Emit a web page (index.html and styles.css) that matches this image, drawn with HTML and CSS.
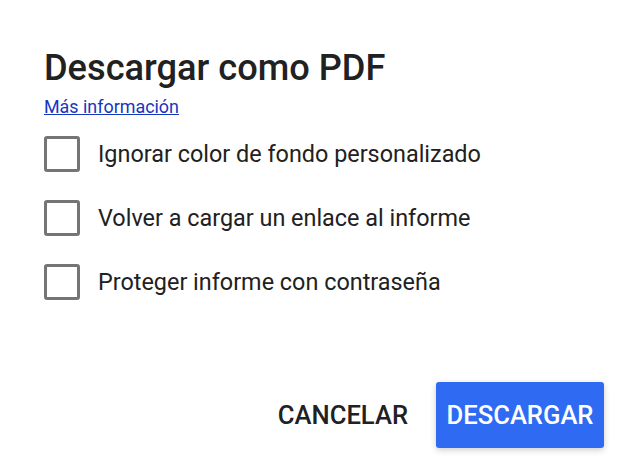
FILE: index.html
```
<!DOCTYPE html>
<html lang="es">
<head>
<meta charset="utf-8">
<link rel="stylesheet" href="styles.css">
</head>
<body>
<div class="dialog">
  <h1 class="title">Descargar como PDF</h1>
  <a class="link" href="#">Más información</a>
  <div class="options">
    <label class="option"><span class="box"></span><span class="label">Ignorar color de fondo personalizado</span></label>
    <label class="option"><span class="box"></span><span class="label">Volver a cargar un enlace al informe</span></label>
    <label class="option"><span class="box"></span><span class="label">Proteger informe con contraseña</span></label>
  </div>
  <div class="actions">
    <button class="btn btn-text">CANCELAR</button>
    <button class="btn btn-primary">DESCARGAR</button>
  </div>
</div>
</body>
</html>
```
FILE: styles.css
```
html, body {
  margin: 0;
  padding: 0;
  background: #ffffff;
}
body {
  font-family: Roboto, "Liberation Sans", sans-serif;
  color: #212121;
  width: 628px;
  height: 466px;
  overflow: hidden;
}
.dialog {
  padding: 47px 24px 0 44px;
  display: flex;
  flex-direction: column;
}
.title {
  margin: 0;
  font-size: 36.2px;
  font-weight: 500;
  line-height: 42px;
  color: #212121;
}
.link {
  margin-top: 7px;
  font-size: 17.9px;
  line-height: 22px;
  color: #1636c0;
  text-decoration: underline;
  align-self: flex-start;
}
.options {
  margin-top: 18px;
  display: flex;
  flex-direction: column;
  gap: 28px;
}
.option {
  display: flex;
  align-items: center;
  gap: 18px;
  height: 36px;
}
.box {
  box-sizing: border-box;
  width: 36px;
  height: 36px;
  border: 3.5px solid #757575;
  border-radius: 3px;
  flex: none;
}
.label {
  font-size: 23.4px;
  color: #212121;
}
.actions {
  margin-top: 82px;
  display: flex;
  justify-content: flex-end;
  align-items: center;
  gap: 28px;
}
.btn {
  font-family: Roboto, "Liberation Sans", sans-serif;
  font-size: 25.6px;
  font-weight: 500;
  border: none;
  background: none;
  cursor: pointer;
}
.btn-text {
  color: #212121;
  padding: 0;
}
.btn-primary {
  background: #2f6bf2;
  color: #ffffff;
  width: 168px;
  height: 66px;
  padding: 0;
  border-radius: 3px;
  box-shadow: 0 2px 6px rgba(0,0,0,0.2);
}
```
